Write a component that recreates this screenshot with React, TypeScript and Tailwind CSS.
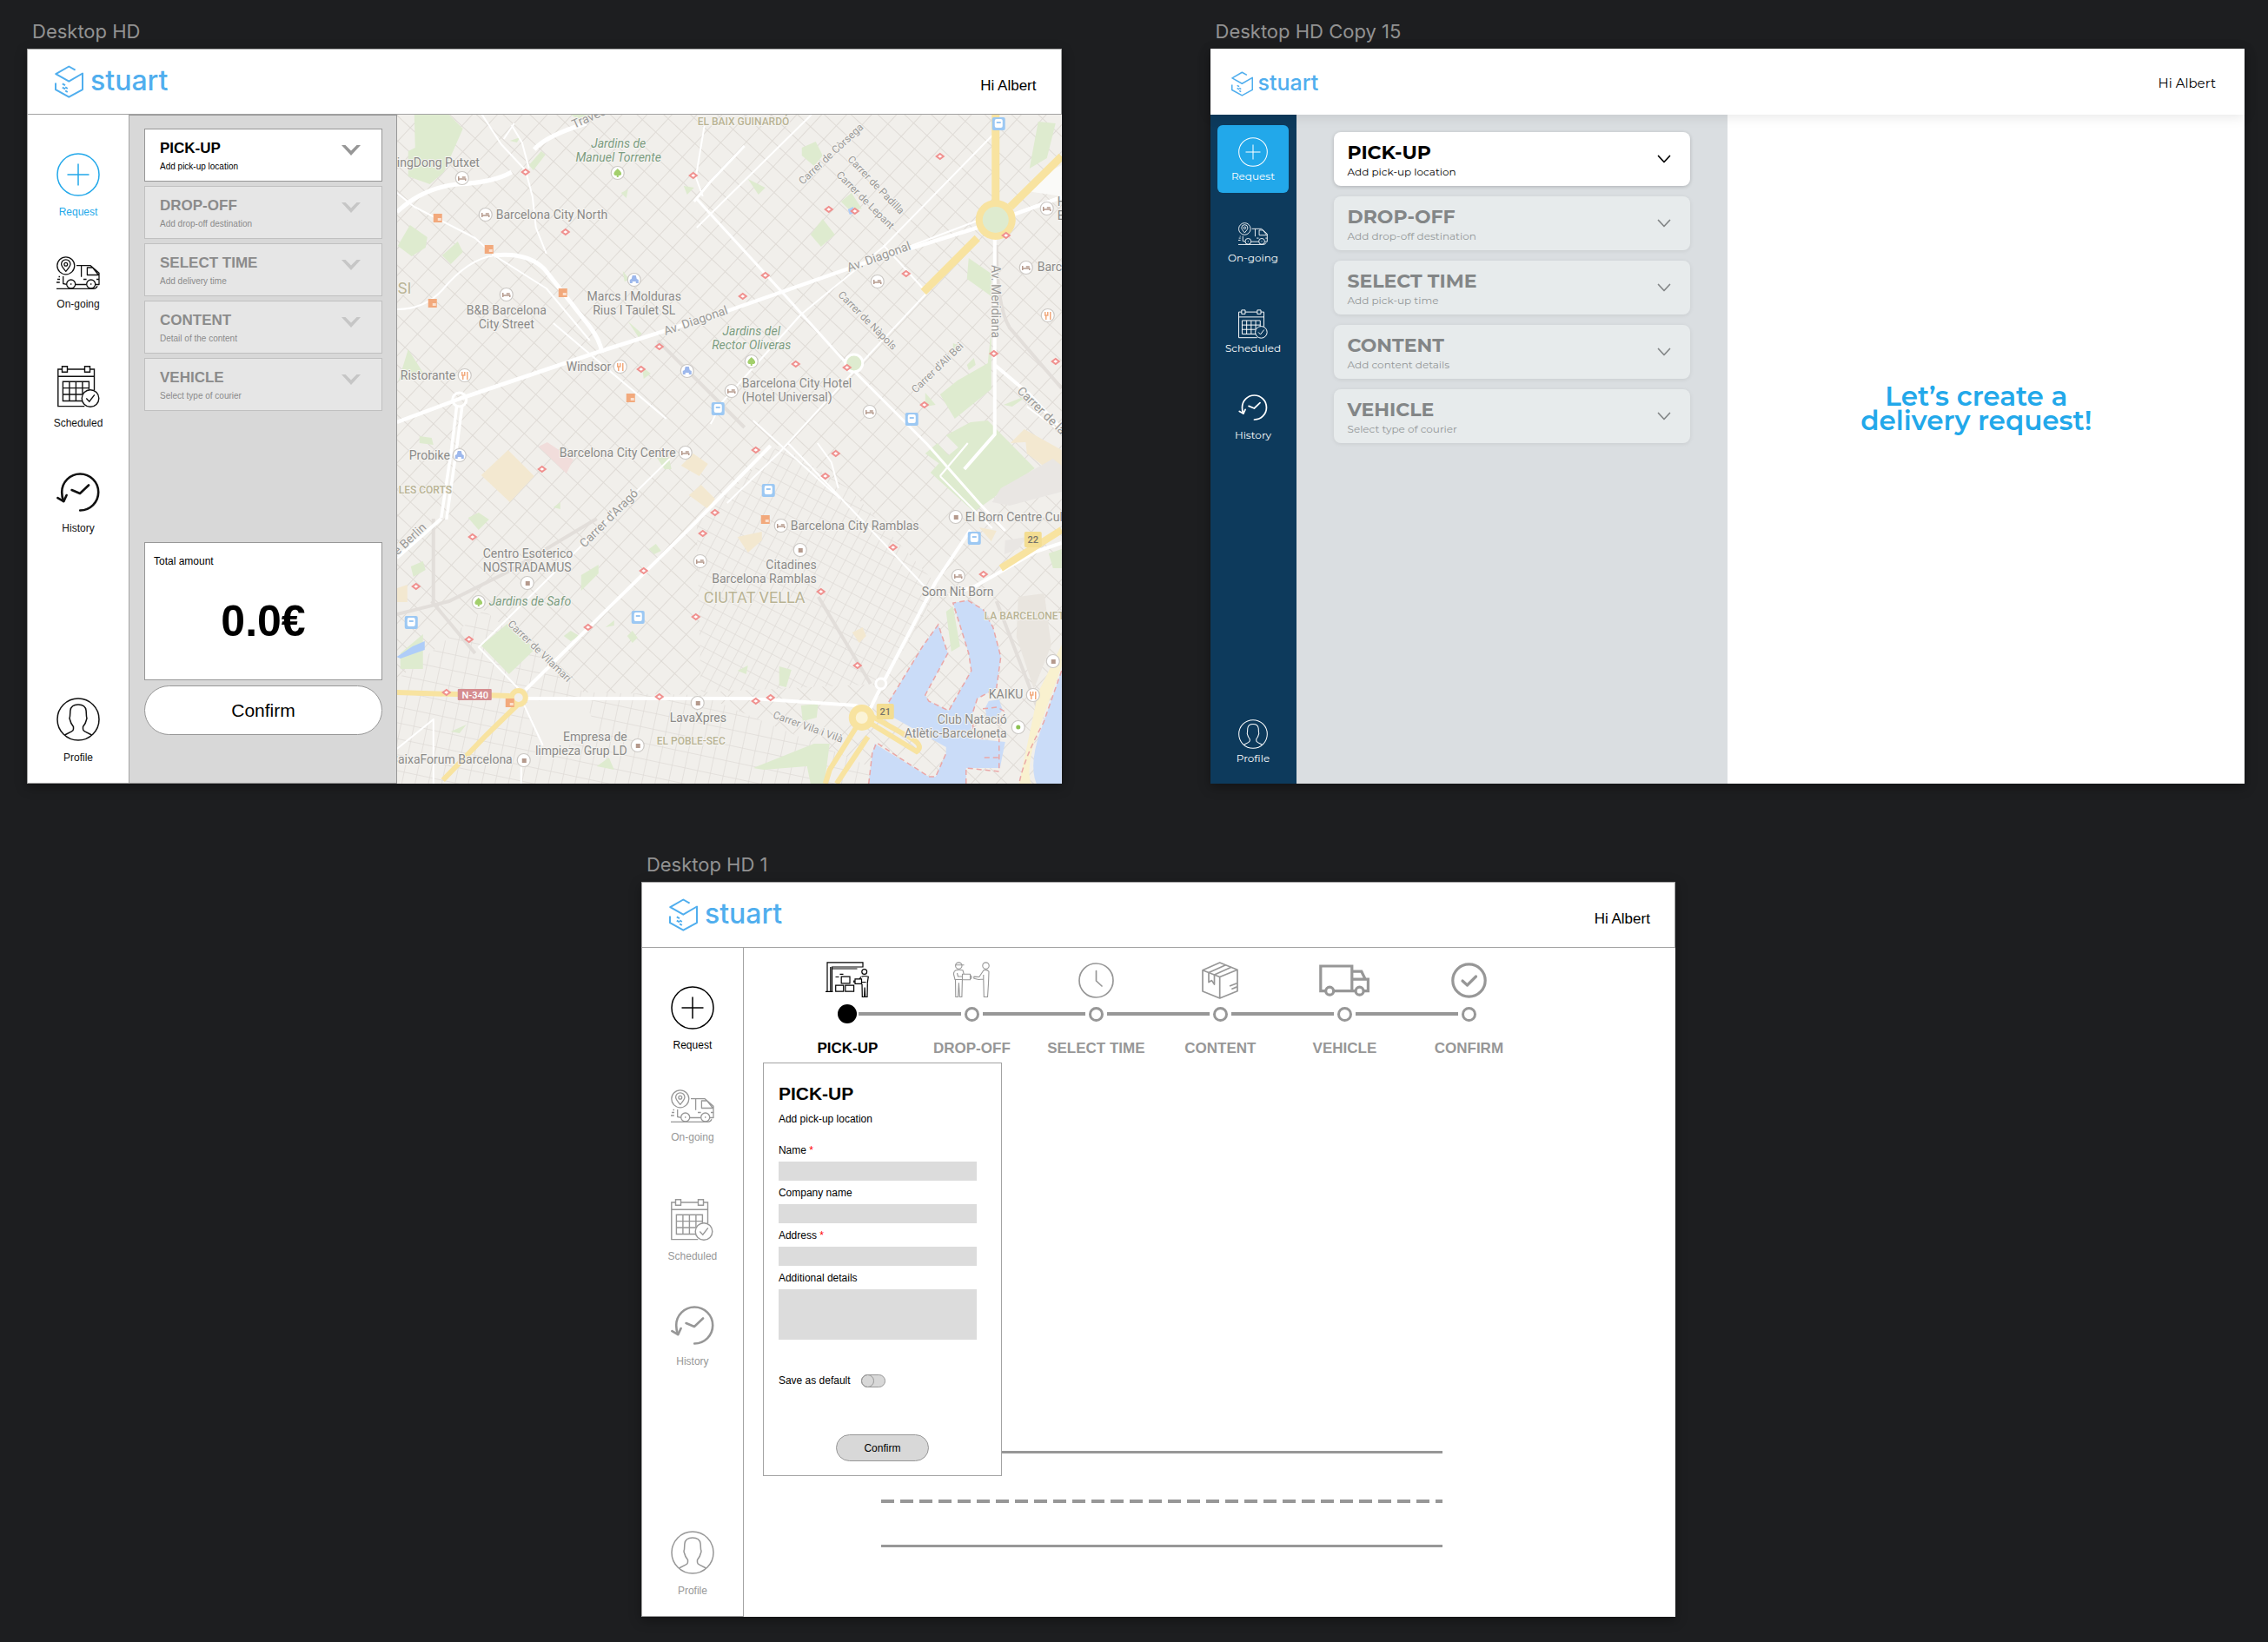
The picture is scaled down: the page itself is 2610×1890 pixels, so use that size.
import type { ReactNode } from "react";

/* ---------- Icons ---------- */

type IconProps = { className?: string };

function LogoMark({ className }: IconProps) {
  return (
    <svg viewBox="0 0 33 38" className={className} fill="none" stroke="currentColor" strokeWidth="2" strokeLinejoin="round" aria-hidden="true">
      <path d="M23.6 5.6 16.3 1.5 1.3 10.2l15 8.5L32 9.5v18.6l-15.7 8.6L1 28.2v-7.8" />
      <path d="M8.8 21.4l3.2 1.8M12.2 25.4l2.6 1.6M8.8 25.6l3.2 1.8M12.2 29.4l2.6 1.6" />
    </svg>
  );
}

function PlusIcon({ className }: IconProps) {
  return (
    <svg viewBox="0 0 50 50" className={className} fill="none" stroke="currentColor" strokeWidth="1.5" aria-hidden="true">
      <circle cx="25" cy="25" r="24" />
      <path d="M25 12.5v25M12.5 25h25" />
    </svg>
  );
}

function DeliveryIcon({ className }: IconProps) {
  return (
    <svg viewBox="0 0 50 38" className={className} fill="none" stroke="currentColor" strokeWidth="1.3" strokeLinejoin="round" aria-hidden="true">
      <circle cx="10.8" cy="10.8" r="10" />
      <path d="M10.8 17.4C7.2 13.2 5.6 11 5.6 9a5.2 5.2 0 0 1 10.4 0c0 2-1.600 4.200-5.200 8.400z" />
      <circle cx="10.8" cy="9.2" r="1.9" />
      <path d="M23 10.700h16.200l9.800 8.600V32.500H44.800M28.600 10.700v13M35.400 13h6.200l6.800 8.500h-13zM7.700 23v8.500l4 .8M21.800 32.500h12.700M31 26.500h3.600M46 26.500h3" />
      <circle cx="16.700" cy="32" r="5" />
      <circle cx="39.700" cy="32" r="5" />
      <path d="M16 32h1.400M39 32h1.400M0 37.300h42.500q3.500 0 4.500-3M2.500 23.500h1.500M1 26.500h3M0 30h3.800" />
    </svg>
  );
}

function CalendarIcon({ className }: IconProps) {
  return (
    <svg viewBox="0 0 49 48" className={className} fill="none" stroke="currentColor" strokeWidth="1.4" aria-hidden="true">
      <path d="M5.500 4H.8v42.600h30.500M11.500 4h20M37.500 4h5v24M.8 12.300h41.700" />
      <path d="M5.500.8h6v6.500h-6zM31.500.8h6v6.500h-6z" />
      <path d="M29 40.500H6.400V18.200h30v9.600M6.400 25.600h30M6.400 33h22.300M13.900 18.200v22.300M21.400 18.200v22.300M28.900 18.200v14.500" />
      <circle cx="38" cy="37.500" r="9.800" />
      <path d="M33.300 37.600l3.500 3.600 6-7.800" />
    </svg>
  );
}

function HistoryIcon({ className }: IconProps) {
  return (
    <svg viewBox="0 0 50 45" className={className} fill="none" stroke="currentColor" strokeWidth="2.600" strokeLinecap="round" strokeLinejoin="round" aria-hidden="true">
      <path d="M27.200 43.500a21 21 0 1 0-21-21q0 5 1.800 10.300" />
      <path d="M1.400 29.200l6.900 3.900 3.300-7.100M17.600 20l9.400 4L37 14.500" />
    </svg>
  );
}

function ProfileIcon({ className }: IconProps) {
  return (
    <svg viewBox="0 0 50 50" className={className} fill="none" stroke="currentColor" strokeWidth="1.500" strokeLinejoin="round" aria-hidden="true">
      <circle cx="25" cy="25" r="24" />
      <path d="M9.500 43l7.500-3.800q2.500-1.400 2.500-3v-2.700c-2.600-3-3.300-4.600-3.800-7.500q-1.200-2.400-.2-4.500l.4-6.500q.8-7 9.100-7t9.100 7l.4 6.500q1 2.100-.2 4.500c-.5 2.900-1.200 4.500-3.800 7.500v2.700q0 1.600 2.500 3l7.500 3.800" />
    </svg>
  );
}

function StoreIcon({ className }: IconProps) {
  return (
    <svg viewBox="0 0 50 42" className={className} fill="none" stroke="currentColor" strokeWidth="1.200" aria-hidden="true">
      <path d="M0 34.300h8.500M2 34V.8h41V6H7.500v28M5.800 6v28M7.500 8h29" />
      <path d="M18.200 17.200h9.800v7.600h-9.800zM11.700 27.200h9v7h-9zM22.800 27.200h9.800v7h-9.800zM16.500 14.300h4M11.500 17.500h4" />
      <circle cx="44.700" cy="11.500" r="2.900" />
      <path d="M34 19.800h7.500v5.500h-7.500zM32.700 21.500v2.500M41.500 17.200q3.200-1.400 7.800 0l-1.200 8M40.800 17.200l-1.500 2.600M41.500 23.500h5M42 25.500l.3 15h2.400l.4-11 .6 11h2.300l.3-15.300" />
    </svg>
  );
}

function HandoverIcon({ className }: IconProps) {
  return (
    <svg viewBox="0 0 42 42" className={className} fill="none" stroke="currentColor" strokeWidth="1.100" strokeLinejoin="round" aria-hidden="true">
      <circle cx="6.300" cy="4.600" r="3.700" />
      <path d="M2.500 3.800h10M10.500 14.300h9v6.500h-9zM19.500 15.800l1.500 1v2l-1.500 1M3 9.800q3.500-1 8 0l1.300 4.500M3 9.800Q.2 11 .5 14.500l1.500 6h8.500M4.500 13l1 4h5M2.500 20.500l.3 20h2.700l.9-16 1 16h2.500l.5-19.700" />
      <circle cx="37.500" cy="4.600" r="3.700" />
      <path d="M35 9.800q4-1.300 6 1.500l-.5 14-1 15.200h-4.200l-.5-20.500-5.500.5-5.500-1.200v-2.200l6 .4zM34.800 20v-5" />
    </svg>
  );
}

function ClockIcon({ className }: IconProps) {
  return (
    <svg viewBox="0 0 41 41" className={className} fill="none" stroke="currentColor" strokeWidth="1.700" strokeLinecap="round" strokeLinejoin="round" aria-hidden="true">
      <circle cx="20.500" cy="20.500" r="19.500" />
      <path d="M20.500 9.500v11.500l6.500 6" />
    </svg>
  );
}

function ParcelIcon({ className }: IconProps) {
  return (
    <svg viewBox="0 0 42 43" className={className} fill="none" stroke="currentColor" strokeWidth="1.700" strokeLinejoin="round" aria-hidden="true">
      <path d="M20.700 1 41 9.200v24.500L20.700 42 1 34V9.800zM1 9.800l19.700 7.700L41 9.200M20.700 17.500V42" />
      <path d="M27.500 3.800 8 12.600v11l3.500-2 3 4.500V15L34 6.300M32 28l8.500-3.300M34.300 31.500l6.200-2.600" />
    </svg>
  );
}

function VanIcon({ className }: IconProps) {
  return (
    <svg viewBox="0 0 58 37" className={className} fill="none" stroke="currentColor" strokeWidth="3.200" aria-hidden="true">
      <path d="M7 30.700H1.800V2h36v28.700H17M37.800 8.200h11l4.400 9h3.200v13.500h-5M37.800 17.200h16M41.500 30.700h-4" />
      <circle cx="12.200" cy="30.700" r="4.500" />
      <circle cx="46.600" cy="30.700" r="4.500" />
    </svg>
  );
}

function CheckCircleIcon({ className }: IconProps) {
  return (
    <svg viewBox="0 0 41 41" className={className} fill="none" stroke="currentColor" strokeWidth="3.200" strokeLinecap="round" strokeLinejoin="round" aria-hidden="true">
      <circle cx="20.500" cy="20.500" r="18.700" />
      <path d="M13 21l5.500 5L28.500 16" />
    </svg>
  );
}

function SolidChevron({ className }: IconProps) {
  return (
    <svg viewBox="0 0 22 12" className={className} fill="#979797" aria-hidden="true">
      <path d="M0 0h4.500L11 6.600 17.500 0H22L11 12z" />
    </svg>
  );
}

function ThinChevron({ className }: IconProps) {
  return (
    <svg viewBox="0 0 16 10" className={className} fill="none" stroke="currentColor" strokeWidth="1.700" strokeLinecap="round" strokeLinejoin="round" aria-hidden="true">
      <path d="M1.500 1.500 8 8.500l6.500-7" />
    </svg>
  );
}

/* ---------- Map ---------- */

type MapText = { t: string; x: number; y: number; r?: number; a?: "end" | "middle"; k?: "park" | "area" | "city" | "street" | "avenue" };

const mapTexts: MapText[] = [
  { t: "ingDong Putxet", x: 0, y: 60 },
  { t: "Barcelona City North", x: 114, y: 120 },
  { t: "EL BAIX GUINARDÓ", x: 346, y: 12, k: "area" },
  { t: "Jardins de", x: 255, y: 38, a: "middle", k: "park" },
  { t: "Manuel Torrente", x: 255, y: 54, a: "middle", k: "park" },
  { t: "Travessera", x: 204, y: 16, r: -24, k: "avenue" },
  { t: "Marcs I Molduras", x: 273, y: 214, a: "middle" },
  { t: "Rius I Taulet SL", x: 273, y: 230, a: "middle" },
  { t: "B&B Barcelona", x: 126, y: 230, a: "middle" },
  { t: "City Street", x: 126, y: 246, a: "middle" },
  { t: "SI", x: 1, y: 206, k: "city" },
  { t: "Av. Diagonal", x: 309, y: 254, r: -19, k: "avenue" },
  { t: "Jardins del", x: 408, y: 254, a: "middle", k: "park" },
  { t: "Rector Oliveras", x: 408, y: 270, a: "middle", k: "park" },
  { t: "Windsor", x: 195, y: 295 },
  { t: "Ristorante", x: 4, y: 305 },
  { t: "Carrer de Còrsega", x: 467, y: 81, r: -43, k: "street" },
  { t: "Carrer de Padilla", x: 518, y: 52, r: 46, k: "street" },
  { t: "Carrer de Lepant", x: 505, y: 70, r: 45, k: "street" },
  { t: "Av. Diagonal", x: 520, y: 181, r: -20, k: "avenue" },
  { t: "Carrer de Nàpols", x: 507, y: 208, r: 45, k: "street" },
  { t: "Carrer d'Ali Bei", x: 597, y: 321, r: -44, k: "street" },
  { t: "Av. Meridiana", x: 684, y: 173, r: 90, k: "avenue" },
  { t: "Carrer de la", x: 713, y: 319, r: 44, k: "avenue" },
  { t: "Barcelona City Hotel", x: 397, y: 314 },
  { t: "(Hotel Universal)", x: 397, y: 330 },
  { t: "H", x: 760, y: 105 },
  { t: "B", x: 760, y: 121 },
  { t: "Barc", x: 737, y: 180 },
  { t: "Probike", x: 14, y: 397 },
  { t: "Barcelona City Centre", x: 187, y: 394 },
  { t: "LES CORTS", x: 2, y: 436, k: "area" },
  { t: "de Berlin", x: -5, y: 513, r: -43, k: "avenue" },
  { t: "Carrer d'Aragó", x: 216, y: 499, r: -45, k: "avenue" },
  { t: "Centro Esoterico", x: 99, y: 510 },
  { t: "NOSTRADAMUS", x: 99, y: 526 },
  { t: "Jardins de Safo", x: 106, y: 565, k: "park" },
  { t: "Carrer de Vilamarí", x: 127, y: 587, r: 44, k: "street" },
  { t: "LavaXpres", x: 314, y: 699 },
  { t: "Empresa de", x: 265, y: 721, a: "end" },
  { t: "limpieza Grup LD", x: 265, y: 737, a: "end" },
  { t: "EL POBLE-SEC", x: 299, y: 725, k: "area" },
  { t: "CaixaForum Barcelona", x: 133, y: 747, a: "end" },
  { t: "Barcelona City Ramblas", x: 453, y: 478 },
  { t: "El Born Centre Cul", x: 654, y: 468 },
  { t: "Citadines", x: 483, y: 523, a: "end" },
  { t: "Barcelona Ramblas", x: 483, y: 539, a: "end" },
  { t: "CIUTAT VELLA", x: 353, y: 562, k: "city" },
  { t: "Som Nit Born", x: 604, y: 554 },
  { t: "LA BARCELONET", x: 676, y: 581, k: "area" },
  { t: "KAIKU", x: 681, y: 672 },
  { t: "Club Natació", x: 702, y: 701, a: "end" },
  { t: "Atlètic-Barceloneta", x: 702, y: 717, a: "end" },
  { t: "Carrer Vila i Vilà", x: 432, y: 694, r: 20, k: "street" },
];

const textStyle = {
  poi: "fill-[#8b8a88] text-[14px]",
  park: "fill-[#7c9c80] text-[14px] italic",
  area: "fill-[#b9b394] text-[12px] font-medium",
  city: "fill-[#b9b394] text-[18px]",
  street: "fill-[#9b9a98] text-[12px]",
  avenue: "fill-[#9b9a98] text-[14px]",
};

const metro = [
  [148, 66], [341, 70], [194, 135], [302, 267], [281, 293], [625, 48], [497, 109], [527, 111], [424, 185], [398, 209],
  [586, 183], [701, 139], [687, 275], [758, 284], [459, 287], [518, 291], [607, 334], [167, 408], [87, 486], [22, 543],
  [83, 604], [57, 665], [302, 670], [366, 458], [352, 482], [284, 525], [220, 590], [344, 578], [413, 386], [505, 390],
  [493, 416], [571, 498], [675, 529], [488, 549], [530, 634], [430, 671], [413, 675],
];
const ticket = [[47, 119], [106, 155], [41, 217], [191, 205], [269, 326], [424, 466], [130, 677]];
const station = [[369, 338], [692, 10], [592, 350], [16, 584], [277, 578], [427, 432], [664, 487]];
const hotel = [[75, 73], [102, 115], [126, 207], [385, 318], [553, 192], [748, 108], [724, 176], [544, 342], [332, 389], [442, 473], [349, 514], [646, 531]];
const food = [[257, 290], [78, 300], [749, 231], [732, 668]];
const blue = [[273, 190], [334, 295], [72, 392]];
const park = [[254, 67], [408, 284], [94, 561]];
const place = [[150, 539], [346, 677], [277, 726], [146, 743], [643, 463], [464, 501], [755, 629]];

function BarcelonaMap({ className }: IconProps) {
  return (
    <svg viewBox="0 0 765 770" preserveAspectRatio="xMidYMid slice" className={className} role="img" aria-label="Map of Barcelona">
      <defs>
        <pattern id="blocks" width="21" height="21" patternUnits="userSpaceOnUse" patternTransform="rotate(43)">
          <path d="M0 0h21M0 0v21" stroke="#dfdbd6" strokeWidth="2" />
        </pattern>
        <pattern id="oldtown" width="12" height="15" patternUnits="userSpaceOnUse" patternTransform="rotate(28)">
          <path d="M0 0h12M0 0v15" stroke="#e0dcd7" strokeWidth="1.500" />
        </pattern>
        <pattern id="west" width="15" height="18" patternUnits="userSpaceOnUse" patternTransform="rotate(12)">
          <path d="M0 0h15M0 0v18" stroke="#e0dcd7" strokeWidth="1.500" />
        </pattern>
      </defs>
      <rect width="765" height="770" fill="#f1efeb" />
      <rect width="765" height="770" fill="url(#blocks)" />
      <path d="M0 650 100 570 215 665 350 668 590 770H0z" fill="#f1efeb" />
      <path d="M0 650 100 570 215 665 350 668 590 770H0z" fill="url(#west)" />
      <path d="M345 470 440 380 520 430 625 545 560 655 350 665z" fill="#f1efeb" />
      <path d="M345 470 440 380 520 430 625 545 560 655 350 665z" fill="url(#oldtown)" />
      <path d="M150 675 215 672 235 720 165 730z" fill="#f1efeb" />

      {/* faint railways and secondary streets */}
      <g fill="none" stroke="#e2deda" strokeWidth="4">
        <path d="M0 575 60 560 130 525 230 465M42 465v100M300 260 400 360M690 150q0 70 15 95l60 70M485 555l60 100M690 560l50 130M40 560 90 620" />
      </g>

      {/* parks */}
      <g fill="#deebcf">
        <path d="M20 0h40l16 16-22 50-16 14-25-9V42l8-4zM15 127l20 14-2 12-16 10-16-12zM52 162l18-16 6 12-14 14zM13 270l19 30-30 6zM152 58l14-16 5 4-14 18zM200 0h24l-14 6zM466 38l16-7 8 16-10 12-14-12zM404 74l20 10-8 8zM476 138l14-18 14 18-16 14zM511 100l12-10 12 18-14 2zM738 8l20 2-10 40-20 12zM658 165l26 18v26l-28-20zM625 322l20-16 35-20 4-40v70l-42 34zM608 320l12 14-12 2zM698 334l30-12-20 14z" />
        <path d="M624 401l22-18-14-14 28-15 20-2 54 55-70 50-50-45zM608 390l14-12 22 24-8 8zM97 611l30-25 32 29-30 29zM4 620l26-22v40H4zM16 520l14-6 3 10-14 8zM82 464l12-6 12 8-12 12zM212 530l20-12v10l-20 20zM300 396l12-6 4 18h-8zM632 572l8-6 8 46-10 6zM410 752l70-28h18l-6 46h-16l-4-20-50 4zM465 680l20-2-2 16-16 4zM392 640l12-6-2 10zM440 635l14 4-6 20-8-2zM62 710l18-8-8 10zM230 750l14-10 6 14zM750 505l15-5v22h-10z" />
        <path d="M130 30l12-4-4 6zM258 90l8-4-2 10zM260 180l8 10-6 2zM266 238l16 14-4 4zM282 290l10 8-8 6zM330 82l12 2-8 8zM26 370l14 2 2 8-16-2zM192 600l8-6 10 6-10 6zM240 590l10-8v6zM265 600l6-6 6 8-6 6zM290 500l8-6 6 8-8 4zM180 452l8-6v8zM640 263l10 4-10 8zM656 288l8-8 2 8-8 6z" />
      </g>
      <g fill="#f3e8d0">
        <path d="M97 415l31-29 30 30-28 30zM327 404l14-14 17 12-10 14zM336 438l14-12 16 16-8 12zM0 545l12-4v20H0zM392 486l28-6v10l-16 14zM524 596l12-6 4 10-8 8zM670 475l20 4-6 12zM722 362l43 24v34l-40-30zM706 378l16-16 14 14z" />
      </g>
      <path d="M163 382l10-5 30 20-8 16z" fill="#f1dddb" />
      <path d="M725 88l20-20 20-10v36z" fill="#fafaf8" />
      <path d="M715 555l30-4 8 60-20 50-20-60z" fill="#e9e5df" />
      <path d="M695 430l60-34 10 8v30l-60 16-20-4zM700 490l25-4-10 14-16 6z" fill="#e9e6e3" />
      <path d="M0 624 18 612l14-6v10L4 626zM519 109l6-3 2 7-6 2z" fill="#afcdf8" />

      {/* harbour and sea */}
      <path d="M640 562 657 559 675 570 686 590 695 624 690 660 668 672 662 690 660 718 700 722 694 752 655 752V770H543L547 735 550 724 612 762 620 762 632 735 632 728 568 692 566 676 605 612 623 587 634 620 608 668 612 675 635 686 661 640 658 620Z" fill="#cadcf8" />
      <path d="M677 683l4-8 12-2 4 12-6 8-12 2z" fill="#cadcf8" />
      <path d="M765 610 738 665 716 770h14q-6-14 4-50l31-85z" fill="#f9f1cf" />
      <path d="M765 640 744 700q-18 46-8 70h29z" fill="#cadcf8" />
      <g fill="none" stroke="#eaa7a7" strokeWidth="1.500" strokeDasharray="6 4">
        <path d="M543 770 547 735 552 723 612 762 620 762 632 735M566 676 605 612 623 587 634 620 608 668 612 675 635 686 661 640 658 620 640 562 657 559 675 570 686 590 695 624 690 660 668 672 662 690 664 716 676 718M765 640 744 700q-22 40-28 70M655 770V752l38 4v-60l8-8-10-6-18 2M676 740h20" />
      </g>

      {/* white streets */}
      <g fill="none" stroke="#fff" strokeLinejoin="round">
        <path strokeWidth="5" d="M0 112q30-28 70-32 42-2 62-14M158 40q14-16 60-30M112 162q38-4 58 16l52 66q12 16 14 30" />
        <path strokeWidth="4.500" d="M0 354 72 327 235 272 380 226 443 204 540 170 668 130 765 95" />
        <path strokeWidth="2" d="M560 163 668 122M715 112l50-18" />
        <path strokeWidth="3" d="M345 97l98 107 75 83 92 92 60 68 30 32M342 100l18-22 40-42" />
        <path strokeWidth="2" d="M98 0l22 34 28 30 8 30 4 36 12 30M135 10l-12 18M152 62l-8-30-12-20M0 90l20 16 70 36 22 20 60 38 50 60M112 162q-30 4-60 40-20 22-52 22M354 12l-10 60 8 22" />
        <path strokeWidth="2" d="M477 0 345 130M685 24 560 152l-95 78-90 100-14 26M610 205l-50-55M610 205l-60 64-110 120-60 58M180 240l130 110M410 352l100 90M450 378l54 56 110 116" />
        <path strokeWidth="3.500" d="M69 334l-6 50-12 80M75 336l-6 46-12 84" />
        <path strokeWidth="4" d="M51 465 0 510M148 662l190-187 92-94M660 478l-40 60-60 115-16 32" />
        <path strokeWidth="2" d="M314 396 94 613l52 54M142 670l26 56M484 378l16 22 8 30M625 416l60 60M625 416l32-38" />
        <path strokeWidth="4" d="M688 138v230l-35 40M688 288l40 34 37 40M410 672l118 8 18 10M148 672h265M765 493l-30 10-70 40-30 10" />
        <path strokeWidth="2" d="M0 730l42-34v74M143 745v25M765 366l-40-30" />
      </g>
      <g fill="none" stroke="#fff" strokeWidth="3">
        <circle cx="72" cy="328" r="8" />
        <circle cx="526" cy="286" r="10" fill="#deebcf" />
        <circle cx="557" cy="655" r="6" fill="#f1efeb" />
      </g>

      {/* main roads */}
      <g fill="none" stroke="#f8e3a0" strokeWidth="9">
        <path d="M689 0v102M765 48 706 106M668 142l-62 62" />
        <circle cx="689" cy="121" r="19" strokeWidth="8" fill="#deebcf" />
        <path strokeWidth="6" d="M0 665l130 4M138 680l-35 34-50 52" />
        <circle cx="140" cy="671" r="8" strokeWidth="6" fill="#f1efeb" />
        <path strokeWidth="8" d="M765 478l-70 44" />
        <circle cx="535" cy="694" r="11" strokeWidth="8" fill="#fbf3d6" />
        <path strokeWidth="6" d="M544 700l54 33q8-6-4-14l-50-28M528 706l-30 48-5 16M542 716l-36 54" />
      </g>
      <g>
        <rect x="70" y="661" width="39" height="13" rx="1" fill="#d58d90" />
        <rect x="722" y="480" width="20" height="18" rx="2" fill="#f3dd92" />
        <rect x="552" y="678" width="20" height="18" rx="2" fill="#f3dd92" />
      </g>

      {/* markers */}
      {metro.map(([x, y]) => (
        <path key={`m${x}-${y}`} d={`M${x - 4} ${y}l4-3 4 3-4 3z`} fill="#fff" stroke="#f0908e" strokeWidth="2" />
      ))}
      {ticket.map(([x, y]) => (
        <g key={`t${x}-${y}`}>
          <rect x={x - 5} y={y - 5} width="10" height="10" fill="#f2a97c" />
          <path d={`M${x} ${y + 3}v-3h4v3z`} fill="#fbe0cf" />
        </g>
      ))}
      {station.map(([x, y]) => (
        <g key={`s${x}-${y}`}>
          <rect x={x - 7} y={y - 7} width="15" height="15" rx="2" fill="#9cc8f3" />
          <rect x={x - 4} y={y - 5} width="9" height="10" rx="2" fill="#fff" />
          <path d={`M${x - 2} ${y - 1}h5`} stroke="#9cc8f3" strokeWidth="2" />
        </g>
      ))}
      {[...hotel, ...food, ...blue, ...park, ...place, [715, 705]].map(([x, y]) => (
        <circle key={`c${x}-${y}`} cx={x} cy={y} r="7.500" fill="#fff" stroke="#cbc8c4" strokeWidth="1.200" />
      ))}
      {hotel.map(([x, y]) => (
        <path key={`h${x}-${y}`} d={`M${x - 4} ${y - 2}v5M${x - 4} ${y + 1}h8v2M${x} ${y - 1}h4`} fill="none" stroke="#b59a8d" strokeWidth="1.500" />
      ))}
      {food.map(([x, y]) => (
        <path key={`f${x}-${y}`} d={`M${x - 3} ${y - 4}v4h3v-4M${x - 2} ${y}v5M${x + 3} ${y + 5}v-9`} fill="none" stroke="#f2a97c" strokeWidth="1.500" />
      ))}
      {blue.map(([x, y]) => (
        <path key={`b${x}-${y}`} d={`M${x - 5} ${y + 4}v-4l2-1 1-4h4l1 4 2 1v4h-3v-2h-4v2z`} fill="#9db8ec" />
      ))}
      {park.map(([x, y]) => (
        <path key={`p${x}-${y}`} d={`M${x} ${y - 5}q7 6 3 8h-2v2h-2v-2h-2q-4-2 3-8z`} fill="#a3cf6c" />
      ))}
      {place.map(([x, y]) => (
        <rect key={`r${x}-${y}`} x={x - 2} y={y - 2} width="5" height="5" fill="#b59a8d" />
      ))}
      <circle cx="715" cy="705" r="2.500" fill="#8cc152" />

      <g className="font-['Roboto',sans-serif]" paintOrder="stroke" stroke="#f5f4f1" strokeWidth="2" strokeLinejoin="round">
        {mapTexts.map((m) => (
          <text key={`${m.t}${m.x}`} x={m.x} y={m.y} textAnchor={m.a} transform={m.r ? `rotate(${m.r} ${m.x} ${m.y})` : undefined} className={textStyle[m.k ?? "poi"]}>
            {m.t}
          </text>
        ))}
      </g>
      <g className="font-['Roboto',sans-serif] text-[11px] font-medium" textAnchor="middle">
        <text x="90" y="672" fill="#fff">N-340</text>
        <text x="732" y="493" fill="#77736a">22</text>
        <text x="562" y="691" fill="#77736a">21</text>
      </g>
    </svg>
  );
}

/* ---------- Shared pieces ---------- */

function Artboard({ name, className = "", children }: { name: string; className?: string; children: ReactNode }) {
  return (
    <section className={className}>
      <h2 className="mb-1.5 ml-1.5 font-['Inter',sans-serif] text-[22px] leading-7 text-[#929292]">{name}</h2>
      <div className="flex min-h-[846px] flex-col bg-white shadow-[0_4px_12px_rgba(0,0,0,0.35)]">{children}</div>
    </section>
  );
}

function WireHeader() {
  return (
    <header className="flex h-[76px] items-center justify-between border border-[#a3a3a3] pr-7 pl-[31px]">
      <a href="#home" className="flex items-center gap-2 text-[#50aeee]">
        <LogoMark className="h-[38px] w-[33px]" />
        <span className="-mt-0.5 font-['Inter',sans-serif] text-[32px] leading-9 font-medium">stuart</span>
      </a>
      <span className="mt-2.5 text-[17px] leading-5">Hi Albert</span>
    </header>
  );
}

type NavEntry = { label: string; icon: ReactNode; className: string };

const wireNav: NavEntry[] = [
  { label: "Request", icon: <PlusIcon className="h-[50px] w-[50px]" />, className: "mt-11 gap-[9px]" },
  { label: "On-going", icon: <DeliveryIcon className="h-[38px] w-[50px]" />, className: "mt-[42px] gap-2" },
  { label: "Scheduled", icon: <CalendarIcon className="h-12 w-[49px]" />, className: "mt-[62px] gap-[9px]" },
  { label: "History", icon: <HistoryIcon className="h-[45px] w-[50px]" />, className: "mt-12 gap-[10px]" },
  { label: "Profile", icon: <ProfileIcon className="h-[50px] w-[50px]" />, className: "mt-auto mb-5 gap-[10px]" },
];

function WireNav({ activeClass, idleClass }: { activeClass: string; idleClass: string }) {
  return (
    <nav className="flex w-[118px] shrink-0 flex-col items-center border-x border-b border-[#a3a3a3]">
      {wireNav.map((n, i) => (
        <button key={n.label} type="button" className={`flex flex-col items-center ${n.className} ${i === 0 ? activeClass : idleClass}`}>
          {n.icon}
          <span className="text-[12px] leading-[18px]">{n.label}</span>
        </button>
      ))}
    </nav>
  );
}

/* ---------- Artboard: request with map ---------- */

const wireSteps = [
  ["PICK-UP", "Add pick-up location"],
  ["DROP-OFF", "Add drop-off destination"],
  ["SELECT TIME", "Add delivery time"],
  ["CONTENT", "Detail of the content"],
  ["VEHICLE", "Select type of courier"],
];

function MapRequest() {
  return (
    <Artboard name="Desktop HD">
      <WireHeader />
      <div className="flex flex-1">
        <WireNav activeClass="text-[#22a8ea]" idleClass="text-[#111111]" />
        <div className="flex w-[308px] shrink-0 flex-col border border-l-0 border-[#979797] bg-[#d8d8d8] pt-[15px] pr-4 pb-[55px] pl-[17px]">
          <div className="flex flex-col gap-[5px]">
            {wireSteps.map(([title, text], i) => (
              <button
                key={title}
                type="button"
                className={`flex h-[61px] items-start justify-between border pt-3 pr-6 pl-[17px] text-left ${i === 0 ? "border-[#979797] bg-white" : "border-[#c0c0c0] bg-[#e6e6e6] text-[#8b8b8b]"}`}
              >
                <span className="flex flex-col gap-[5px]">
                  <span className="text-[17px] leading-5 font-bold">{title}</span>
                  <span className="text-[10px] leading-3">{text}</span>
                </span>
                <SolidChevron className={`mt-1.5 h-3 w-[22px] ${i === 0 ? "" : "opacity-40"}`} />
              </button>
            ))}
          </div>
          <div className="mt-auto flex h-[159px] flex-col border border-[#979797] bg-white px-[10px] pt-3">
            <span className="text-[12px] leading-[18px]">Total amount</span>
            <strong className="mt-7 text-center text-[50px] leading-[64px]">0.0€</strong>
          </div>
          <button type="button" className="mt-[6px] h-[57px] rounded-full border border-[#979797] bg-white text-[21px]">
            Confirm
          </button>
        </div>
        <div className="relative min-w-0 flex-1">
          <BarcelonaMap className="absolute inset-0 h-full w-full" />
        </div>
      </div>
    </Artboard>
  );
}

/* ---------- Artboard: styled request ---------- */

const brandNav: NavEntry[] = [
  { label: "Request", icon: <PlusIcon className="h-[34px] w-[34px]" />, className: "mt-3 h-[78px] w-[82px] rounded-md bg-[#22a8ea] pt-3.5 gap-0.5" },
  { label: "On-going", icon: <DeliveryIcon className="h-[26px] w-[34px]" />, className: "mt-[34px] gap-1.5" },
  { label: "Scheduled", icon: <CalendarIcon className="h-[34px] w-[34px]" />, className: "mt-[50px] gap-0.5" },
  { label: "History", icon: <HistoryIcon className="h-[30px] w-[34px]" />, className: "mt-11 gap-2" },
  { label: "Profile", icon: <ProfileIcon className="h-[34px] w-[34px]" />, className: "mt-auto mb-5 gap-0.5" },
];

const brandSteps = [
  ["PICK-UP", "Add pick-up location"],
  ["DROP-OFF", "Add drop-off destination"],
  ["SELECT TIME", "Add pick-up time"],
  ["CONTENT", "Add content details"],
  ["VEHICLE", "Select type of courier"],
];

function BrandRequest() {
  return (
    <Artboard name="Desktop HD Copy 15">
      <div className="flex flex-1 flex-col font-['Montserrat','Inter',sans-serif]">
        <header className="z-10 flex h-[76px] items-center justify-between bg-white pr-[33px] pl-6 shadow-[0_2px_14px_rgba(0,0,0,0.1)]">
          <a href="#home" className="mt-1 flex items-center gap-1.5 text-[#50aeee]">
            <LogoMark className="h-[29px] w-[25px]" />
            <span className="-mt-0.5 font-['Inter',sans-serif] text-[25px] leading-7 font-medium">stuart</span>
          </a>
          <span className="mt-1 text-[15px] leading-5">Hi Albert</span>
        </header>
        <div className="flex flex-1">
          <nav className="flex w-[99px] shrink-0 flex-col items-center bg-[#0d3a5c] text-white">
            {brandNav.map((n) => (
              <button key={n.label} type="button" className={`flex flex-col items-center ${n.className}`}>
                {n.icon}
                <span className="text-[12px] leading-[18px]">{n.label}</span>
              </button>
            ))}
          </nav>
          <div className="flex w-[496px] shrink-0 flex-col gap-3 bg-[#dadee1] px-[43px] pt-5">
            {brandSteps.map(([title, text], i) => (
              <button
                key={title}
                type="button"
                className={`flex h-[62px] items-center justify-between rounded-lg pr-[22px] pl-4 text-left ${i === 0 ? "bg-white shadow-[0_1px_4px_rgba(0,0,0,0.2)]" : "bg-[#e7ebec] text-[#838687] shadow-[0_1px_5px_rgba(0,0,0,0.08)]"}`}
              >
                <span className="flex flex-col pt-1.5">
                  <span className="text-[22px] leading-6 font-bold">{title}</span>
                  <span className={`text-[12px] leading-5 ${i === 0 ? "" : "text-[#939798]"}`}>{text}</span>
                </span>
                <ThinChevron className="h-[10px] w-4" />
              </button>
            ))}
          </div>
          <div className="flex flex-1 justify-center bg-white">
            <p className="mt-[310px] ml-[-22px] text-center text-[31px] leading-7 font-semibold text-[#22a8ea]">
              Let’s create a
              <br />
              delivery request!
            </p>
          </div>
        </div>
      </div>
    </Artboard>
  );
}

/* ---------- Artboard: stepper with form ---------- */

const stepper = [
  { label: "PICK-UP", icon: <StoreIcon className="h-[42px] w-[50px]" /> },
  { label: "DROP-OFF", icon: <HandoverIcon className="h-[42px] w-[42px]" /> },
  { label: "SELECT TIME", icon: <ClockIcon className="h-[41px] w-[41px]" /> },
  { label: "CONTENT", icon: <ParcelIcon className="h-[43px] w-[42px]" /> },
  { label: "VEHICLE", icon: <VanIcon className="h-[37px] w-[58px]" /> },
  { label: "CONFIRM", icon: <CheckCircleIcon className="h-[41px] w-[41px]" /> },
];

function Field({ id, label, required }: { id: string; label: string; required?: boolean }) {
  return (
    <div className="mb-[5px] flex flex-col gap-[3px]">
      <label htmlFor={id} className="text-[12px] leading-[19px]">
        {label} {required && <span className="text-[#f00]">*</span>}
      </label>
      <input id={id} type="text" className="h-[22px] w-full bg-[#dcdcdc] px-2 text-[12px]" />
    </div>
  );
}

function StepRequest() {
  return (
    <Artboard name="Desktop HD 1" className="mt-[79px] ml-[27.7%] w-[1190px] max-w-full">
      <WireHeader />
      <div className="flex flex-1">
        <WireNav activeClass="text-black" idleClass="text-[#979797]" />
        <main className="min-w-0 flex-1">
          <ol className="mt-3 ml-12 grid w-[858px] grid-cols-6">
            {stepper.map((s, i) => (
              <li key={s.label} className={`flex flex-col items-center ${i === 0 ? "text-black" : "text-[#979797]"}`}>
                <span className="flex h-[50px] items-center">{s.icon}</span>
                <span className="mt-0.5 flex h-6 w-full items-center">
                  <span className={`h-1 flex-1 ${i === 0 ? "" : "bg-[#979797]"}`} />
                  {i === 0 ? (
                    <span className="mx-0.5 h-[22px] w-[22px] rounded-full bg-black" />
                  ) : (
                    <span className="mx-1 h-[17px] w-[17px] rounded-full border-[3px] border-[#979797]" />
                  )}
                  <span className={`h-1 flex-1 ${i === 5 ? "" : "bg-[#979797]"}`} />
                </span>
                <span className="mt-[18px] text-[17px] leading-5 font-bold">{s.label}</span>
              </li>
            ))}
          </ol>
          <div className="mt-1.5 ml-[22px] flex">
            <form className="flex h-[476px] w-[275px] flex-col border border-[#a3a3a3] bg-white pt-[23px] pr-7 pl-[17px]" onSubmit={(e) => e.preventDefault()}>
              <h3 className="text-[21px] leading-6 font-bold">PICK-UP</h3>
              <p className="mt-2 text-[12px] leading-[18px]">Add pick-up location</p>
              <div className="mt-[18px] flex flex-col">
                <Field id="name" label="Name" required />
                <Field id="company" label="Company name" />
                <Field id="address" label="Address" required />
                <div className="flex flex-col gap-[3px]">
                  <label htmlFor="details" className="text-[12px] leading-[19px]">Additional details</label>
                  <textarea id="details" className="h-[58px] w-full resize-none bg-[#dcdcdc] px-2 text-[12px]" />
                </div>
              </div>
              <div className="mt-[38px] flex items-center gap-3">
                <label htmlFor="default" className="text-[12px] leading-[18px]">Save as default</label>
                <input
                  id="default"
                  type="checkbox"
                  role="switch"
                  className="flex h-[15px] w-7 appearance-none items-center rounded-full border border-[#979797] bg-[#d8d8d8] before:-ml-px before:h-[15px] before:w-[15px] before:shrink-0 before:rounded-full before:border before:border-[#979797] before:content-['']"
                />
              </div>
              <button type="submit" className="mt-auto mb-4 ml-[66px] h-[31px] w-[107px] rounded-full border border-[#979797] bg-[#d8d8d8] text-[12px]">
                Confirm
              </button>
            </form>
            <div className="mb-[26px] h-[3px] w-[507px] self-end bg-[#979797]" />
          </div>
          <div className="mt-[27px] ml-[158px] h-1 w-[646px] bg-[repeating-linear-gradient(90deg,#979797_0_15px,transparent_15px_22px)]" />
          <div className="mt-12 ml-[158px] h-[3px] w-[646px] bg-[#979797]" />
        </main>
      </div>
    </Artboard>
  );
}

export default function App() {
  return (
    <div className="min-h-screen bg-[#1d1e20] pt-[22px] pr-[27px] pb-[27px] pl-[31px] font-['Liberation_Sans',Arial,sans-serif] text-black">
      <div className="grid grid-cols-2 gap-[171px]">
        <MapRequest />
        <BrandRequest />
      </div>
      <StepRequest />
    </div>
  );
}
